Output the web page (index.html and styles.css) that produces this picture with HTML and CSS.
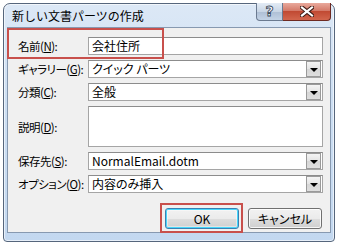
FILE: index.html
```html
<!DOCTYPE html>
<html lang="ja">
<head>
<meta charset="utf-8">
<title>新しい文書パーツの作成</title>
<link rel="stylesheet" href="styles.css">
</head>
<body>
<div class="window">
  <div class="titlebar">
    <span class="title">新しい文書パーツの作成</span>
    <div class="caption-btns">
      <span class="cbtn help">?</span>
      <span class="cbtn close"><svg width="14" height="11" viewBox="0 0 14 11"><path d="M2 1.5 L12 9.5 M12 1.5 L2 9.5" stroke="#3b1a14" stroke-width="4.2" stroke-linecap="square"/><path d="M2 1.5 L12 9.5 M12 1.5 L2 9.5" stroke="#ffffff" stroke-width="2.2" stroke-linecap="square"/></svg></span>
    </div>
  </div>
  <div class="client">
    <div class="form">
      <span class="label">名前(<u>N</u>):</span>
      <div class="field">会社住所</div>
      <span class="label">ギャラリー(<u>G</u>):</span>
      <div class="field combo">クイック パーツ<span class="drop"></span></div>
      <span class="label">分類(<u>C</u>):</span>
      <div class="field combo">全般<span class="drop"></span></div>
      <span class="label">説明(<u>D</u>):</span>
      <div class="field area"></div>
      <span class="label">保存先(<u>S</u>):</span>
      <div class="field combo">NormalEmail.dotm<span class="drop"></span></div>
      <span class="label">オプション(<u>O</u>):</span>
      <div class="field combo">内容のみ挿入<span class="drop"></span></div>
    </div>
    <div class="actions">
      <span class="btn default">OK</span>
      <span class="btn">キャンセル</span>
    </div>
  </div>
</div>
<div class="mark mark-name"></div>
<div class="mark mark-ok"></div>
</body>
</html>
```
FILE: styles.css
```css
html, body {
  margin: 0;
  padding: 0;
  background: #ffffff;
}
body {
  position: relative;
  width: 345px;
  height: 246px;
  overflow: hidden;
  font-family: "Noto Sans CJK JP", "Noto Sans", sans-serif;
  font-size: 12px;
  color: #000;
}
.window {
  margin: 3px 0 0 3px;
  width: 332px;
  height: 239px;
  box-sizing: border-box;
  border: 1px solid #56667c;
  border-radius: 7px 7px 4px 4px;
  background: linear-gradient(to bottom, #dce8f6 0%, #cddff3 40%, #c3d8f0 100%);
  padding: 0 3px 8px 3px;
  display: flex;
  flex-direction: column;
  box-shadow: inset 0 0 0 1px rgba(255,255,255,0.6);
}
.titlebar {
  height: 23px;
  display: flex;
  align-items: flex-start;
  flex-shrink: 0;
}
.title {
  padding-left: 5px;
  line-height: 23px;
  font-size: 12px;
  color: #000;
}
.caption-btns {
  margin-left: auto;
  margin-top: -1px;
  display: flex;
}
.cbtn {
  height: 18px;
  box-sizing: border-box;
  display: flex;
  align-items: center;
  justify-content: center;
  border: 1px solid #6b7a90;
  border-top: none;
}
.help {
  width: 27px;
  border-radius: 0 0 0 4px;
  background: linear-gradient(to bottom, #e3ebf5 0%, #c9d6e6 50%, #aebfd5 51%, #c3d3e6 100%);
  color: #fff;
  font-family: "DejaVu Sans", sans-serif;
  font-weight: bold;
  font-size: 14px;
  line-height: 17px;
  -webkit-text-stroke: 0.9px #3d4b5e;
}
.close {
  width: 48px;
  border-left: none;
  border-color: #6e2a22;
  border-radius: 0 0 4px 0;
  background: linear-gradient(to bottom, #e9a99c 0%, #d47a69 45%, #c14a33 50%, #d2664d 100%);
}
.client {
  flex: 1;
  background: #f0f0f0;
  border: 1px solid #8799b0;
  padding: 9px 7px 0 10px;
}
.form {
  display: grid;
  grid-template-columns: 70px 235px;
  grid-template-rows: 18px 18px 18px 41px 18px 18px;
  row-gap: 5px;
  align-items: center;
  font-feature-settings: "palt" 1;
}
.label {
  white-space: nowrap;
  line-height: 18px;
  font-size: 11.5px;
  letter-spacing: -0.5px;
}
.label u {
  text-underline-offset: 1px;
}
.field {
  height: 18px;
  box-sizing: border-box;
  border: 1px solid #a5a5a5;
  border-top-color: #8c8c8c;
  background: #fff;
  padding-left: 3px;
  line-height: 16px;
  display: flex;
  align-items: center;
  position: relative;
}
.field.area {
  height: 41px;
}
.combo .drop {
  position: absolute;
  right: 1px;
  top: 0px;
  width: 15px;
  height: 16px;
  box-sizing: border-box;
  border: 1px solid #9a9a9a;
  background: linear-gradient(to bottom, #f4f4f4 0%, #e4e4e4 50%, #d6d6d6 51%, #dedede 100%);
}
.combo .drop::after {
  content: "";
  position: absolute;
  left: 3px;
  top: 6px;
  border-left: 4px solid transparent;
  border-right: 4px solid transparent;
  border-top: 4px solid #000;
}
.actions {
  display: flex;
  justify-content: flex-end;
  gap: 9px;
  margin-top: 15px;
  padding-right: 1px;
  font-feature-settings: "palt" 1;
}
.btn {
  width: 74px;
  height: 21px;
  box-sizing: border-box;
  border: 1px solid #707070;
  border-radius: 3px;
  background: linear-gradient(to bottom, #f2f2f2 0%, #ebebeb 50%, #dddddd 51%, #cfcfcf 100%);
  display: flex;
  align-items: center;
  justify-content: center;
  box-shadow: inset 0 0 0 1px rgba(255,255,255,0.8);
}
.btn.default {
  border-color: #3c7fb1;
  box-shadow: inset 0 0 0 1px #48d7fb, inset 0 0 0 2px rgba(255,255,255,0.4);
}
.mark {
  position: absolute;
  border: 2px solid #c8504c;
  box-sizing: border-box;
}
.mark-name {
  left: 7px;
  top: 28px;
  width: 157px;
  height: 31px;
}
.mark-ok {
  left: 160px;
  top: 203px;
  width: 83px;
  height: 30px;
}
```
